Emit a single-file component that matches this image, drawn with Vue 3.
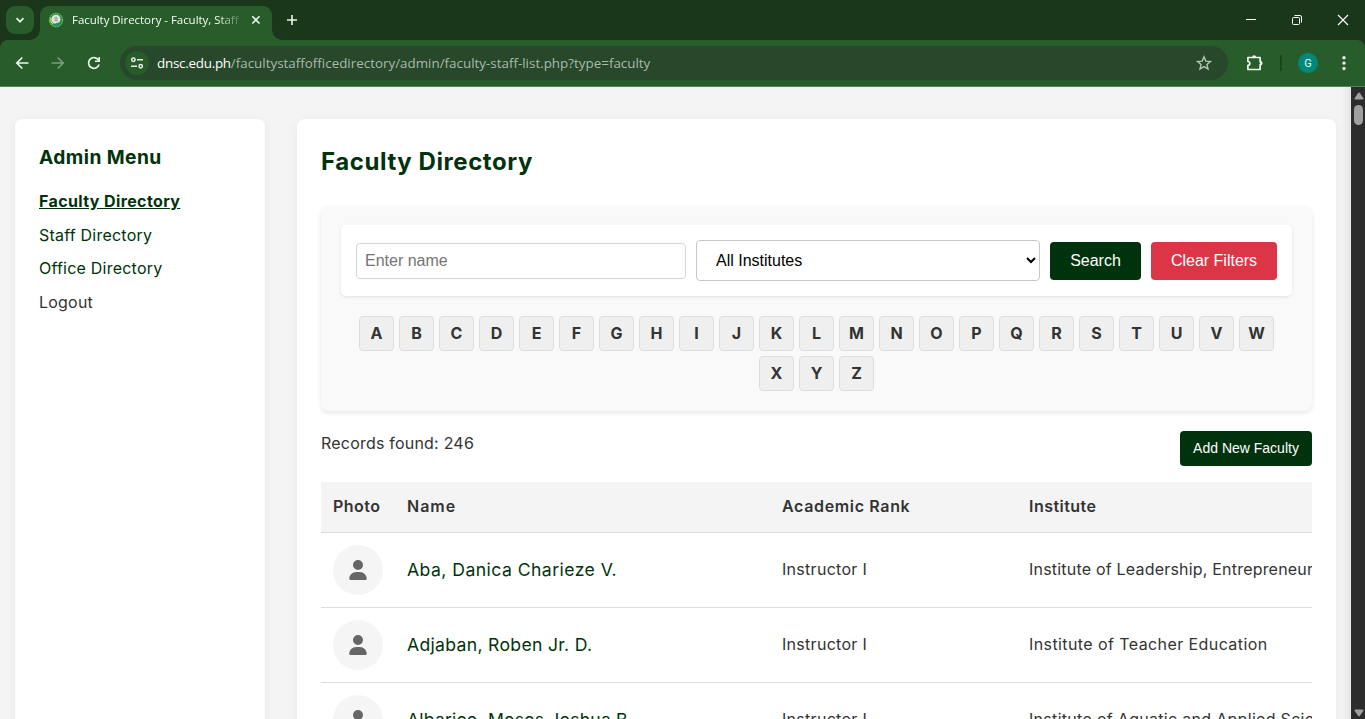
<script setup>
const menu = [
  { label: 'Faculty Directory', cls: 'active' },
  { label: 'Staff Directory', cls: '' },
  { label: 'Office Directory', cls: '' },
  { label: 'Logout', cls: 'logout' },
]
const letters = 'ABCDEFGHIJKLMNOPQRSTUVWXYZ'.split('')
const rows = [
  { name: 'Aba, Danica Charieze V.', rank: 'Instructor I', institute: 'Institute of Leadership, Entrepreneurship' },
  { name: 'Adjaban, Roben Jr. D.', rank: 'Instructor I', institute: 'Institute of Teacher Education' },
  { name: 'Albarico, Moses Joshua B.', rank: 'Instructor I', institute: 'Institute of Aquatic and Applied Sciences' },
]
</script>

<template>
  <div class="window">
    <header class="tabstrip">
      <div class="tab-search">
        <svg width="10" height="10" viewBox="0 0 10 10"><path d="M1.5 3.2 5 6.7 8.5 3.2" fill="none" stroke="#e6eee6" stroke-width="1.7" /></svg>
      </div>
      <div class="tab">
        <svg class="favicon" width="16" height="16" viewBox="0 0 16 16">
          <circle cx="8" cy="8" r="7.4" fill="#2f8a3c" />
          <circle cx="8" cy="8" r="6.6" fill="none" stroke="#7fce6c" stroke-width="1" stroke-dasharray="1.4 1.1" />
          <path d="M3.2 5.5a5.4 5.4 0 0 0 2 6.600" fill="none" stroke="#d8dc5a" stroke-width="1.2" />
          <circle cx="8" cy="7.200" r="4.500" fill="#e4e8e2" />
          <path d="M5.500 6.200h4.800M6.300 8.300h3.800M8 4.200v5.500" stroke="#8a948c" stroke-width=".8" />
          <path d="M7.500 11.200c1.400-.4 2.600-.6 3.600-1.300-.2 2-1.500 3.200-3.400 3.300z" fill="#2189d6" />
        </svg>
        <span class="tab-title">Faculty Directory - Faculty, Staff</span>
        <svg class="tab-close" width="10" height="10" viewBox="0 0 10 10"><path d="m1.300 1.300 7.200 7.200m0-7.200-7.200 7.200" stroke="#f0f5f0" stroke-width="1.600" /></svg>
      </div>
      <svg class="new-tab" width="12" height="12" viewBox="0 0 12 12"><path d="M6 1v10M1 6h10" stroke="#f0f5f0" stroke-width="1.600" /></svg>
      <div class="window-buttons">
        <svg width="12" height="12" viewBox="0 0 12 12"><path d="M1 5.500h10" stroke="#fff" /></svg>
        <svg width="12" height="12" viewBox="0 0 12 12" fill="none" stroke="#fff"><rect x="1.500" y="3.500" width="7" height="7" rx="1" /><path d="M3.500 1.500H9A1.500 1.500 0 0 1 10.500 3v5.500" /></svg>
        <svg width="12" height="12" viewBox="0 0 12 12"><path d="m1 1 10 10m0-10L1 11" stroke="#fff" stroke-width="1.100" /></svg>
      </div>
    </header>

    <div class="toolbar">
      <div class="nav-icons">
        <svg width="14" height="14" viewBox="0 0 14 14" fill="none" stroke="#edf3ed" stroke-width="1.700"><path d="M13.500 7H2M7.300 1.500 1.800 7l5.500 5.500" /></svg>
        <svg width="14" height="14" viewBox="0 0 14 14" fill="none" stroke="#7e9f80" stroke-width="1.600"><path d="M.5 7H12M6.700 1.500 12.200 7l-5.500 5.500" /></svg>
        <svg width="14" height="14" viewBox="0 0 14 14"><path d="M12.100 8.600A5.400 5.400 0 1 1 11.300 3.700L12 4.600" fill="none" stroke="#edf3ed" stroke-width="1.700" /><path d="M13 1v5H8V4.400h3.400V1z" fill="#edf3ed" /></svg>
      </div>
      <div class="omnibox">
        <span class="site-info">
          <svg width="14" height="14" viewBox="0 0 14 14" fill="none" stroke="#e6eee6" stroke-width="1.500"><circle cx="3.400" cy="3.700" r="1.700" /><path d="M7 3.700h6M1 10.300h6" /><circle cx="10.700" cy="10.300" r="1.700" /></svg>
        </span>
        <span class="url"><b>dnsc.edu.ph</b>/facultystaffofficedirectory/admin/faculty-staff-list.php?type=faculty</span>
        <svg class="star" width="16" height="16" viewBox="0 0 16 16"><path d="m8 1.800 1.800 4.300 4.700.4-3.600 3 1.100 4.600-4-2.500-4 2.500 1.100-4.600-3.600-3 4.700-.4z" fill="none" stroke="#b5c3b5" stroke-width="1.400" /></svg>
      </div>
      <svg class="puzzle" width="18" height="18" viewBox="0 0 18 18"><path d="M1.900 3.500h12.200v4.200h.9v2.800h-.9v5H1.900v-4.200c2.600-.3 2.600-3.500 0-3.800z" fill="none" stroke="#f0f5f0" stroke-width="1.700" stroke-linejoin="round" /><path d="M6.100 3.500a2 2.300 0 0 1 4 0zM14.300 7.200a2.300 2 0 0 1 0 4z" fill="#f0f5f0" /></svg>
      <span class="divider"></span>
      <span class="profile">G</span>
      <svg class="dots" width="4" height="16" viewBox="0 0 4 16" fill="#f0f5f0"><circle cx="2" cy="2.700" r="1.700" /><circle cx="2" cy="8.100" r="1.700" /><circle cx="2" cy="13.500" r="1.700" /></svg>
    </div>

    <div class="viewport">
      <div class="page">
        <aside class="sidebar">
          <h3>Admin Menu</h3>
          <ul>
            <li v-for="m in menu" :key="m.label"><a :class="m.cls">{{ m.label }}</a></li>
          </ul>
        </aside>

        <main class="content">
          <h2>Faculty Directory</h2>
          <section class="filters">
            <form class="search-form" @submit.prevent>
              <input type="text" placeholder="Enter name" />
              <select><option>All Institutes</option></select>
              <button class="search" type="button">Search</button>
              <button class="clear" type="button">Clear Filters</button>
            </form>
            <div class="letters">
              <a v-for="l in letters" :key="l">{{ l }}</a>
            </div>
          </section>

          <div class="records">
            <p>Records found: 246</p>
            <button class="add" type="button">Add New Faculty</button>
          </div>

          <div class="table">
            <div class="row head">
              <span>Photo</span><span class="name-head">Name</span><span class="rank-head">Academic Rank</span><span>Institute</span>
            </div>
            <div v-for="r in rows" :key="r.name" class="row">
              <span class="avatar">
                <svg width="18" height="20" viewBox="0 0 448 512"><path fill="#666" d="M224 256A128 128 0 1 0 224 0a128 128 0 1 0 0 256zm-45.700 48C79.800 304 0 383.800 0 482.300 0 498.700 13.300 512 29.700 512h388.600c16.400 0 29.700-13.300 29.700-29.700C448 383.800 368.200 304 269.700 304z" /></svg>
              </span>
              <a class="name">{{ r.name }}</a>
              <span class="rank">{{ r.rank }}</span>
              <span class="institute">{{ r.institute }}</span>
            </div>
          </div>
        </main>
      </div>
      <div class="scrollbar">
        <svg width="10" height="8" viewBox="0 0 10 8"><path d="M4 1.200Q5-.2 6 1.200l3.400 5Q9.900 7.500 8.500 7.500h-7Q.1 7.500.6 6.200z" fill="#9f9f9f" /></svg>
        <i></i>
        <svg class="down" width="10" height="8" viewBox="0 0 10 8"><path d="M4 6.800Q5 8.200 6 6.800l3.400-5Q9.900.5 8.500.5h-7Q.1.5.6 1.800z" fill="#9f9f9f" /></svg>
      </div>
    </div>
  </div>
</template>

<style>
html, body { overflow: hidden; }
</style>

<style scoped>
* { box-sizing: border-box; }
.window { width: 1365px; height: 719px; overflow: hidden; display: flex; flex-direction: column; background: #1b371b; font-family: Inter, "Noto Sans", sans-serif; color: #333; }
svg { display: block; flex: none; }

.tabstrip { height: 40px; flex: none; display: flex; align-items: flex-start; padding: 6px 0 0 6px; }
.tab-search { width: 28px; height: 28px; border-radius: 9px; background: #285c2b; display: grid; place-items: center; margin-right: 6px; }
.tab { position: relative; width: 232px; height: 34px; background: #285c2b; border-radius: 9px 9px 0 0; display: flex; align-items: center; padding: 0 11px 6px 8px; }
.tab::before, .tab::after { content: ""; position: absolute; bottom: 0; width: 10px; height: 10px; }
.tab::before { left: -10px; background: radial-gradient(circle at 0 0, transparent 9.500px, #285c2b 10px); }
.tab::after { right: -10px; background: radial-gradient(circle at 100% 0, transparent 9.500px, #285c2b 10px); }
.tab-title { width: 167px; margin-left: 8px; overflow: hidden; white-space: nowrap; font: 11.500px/18px "Open Sans", sans-serif; letter-spacing: -.04px; color: #f8fbf8; -webkit-mask-image: linear-gradient(90deg, #000 145px, rgba(0,0,0,.2) 167px); mask-image: linear-gradient(90deg, #000 145px, rgba(0,0,0,.2) 167px); }
.tab-close { margin-left: auto; }
.new-tab { margin: 8px 0 0 14px; }
.window-buttons { margin: 8px 16px 0 auto; display: flex; gap: 34px; }

.toolbar { height: 47px; flex: none; background: #285c2b; border-bottom: 1px solid #55855a; border-radius: 8px 8px 0 0; display: flex; align-items: center; padding: 0 19px 0 15px; }
.nav-icons { display: flex; gap: 22px; width: 105px; }
.omnibox { width: 1108px; height: 34px; border-radius: 17px; background: #27482a; display: flex; align-items: center; padding: 0 16px 0 5px; }
.site-info { width: 24px; height: 24px; border-radius: 50%; background: #285c2b; display: grid; place-items: center; margin-right: 8px; flex: none; }
.url { font: 13.400px/20px "Open Sans", sans-serif; color: #a9b9aa; white-space: nowrap; }
.url b { font-weight: 400; color: #fff; letter-spacing: -.25px; }
.star { margin-left: auto; }
.puzzle { margin-left: 18px; }
.divider { width: 2px; height: 16px; margin-left: 16px; background: #1b461e; }
.profile { width: 20px; height: 20px; margin-left: 16px; border-radius: 50%; background: #00897b; color: #e8f6f4; font: 11px/21px Roboto, sans-serif; text-align: center; }
.dots { margin-left: auto; }

.viewport { flex: 1; min-height: 0; display: flex; }
.page { width: 1351px; display: flex; align-items: flex-start; gap: 32px; padding: 32px 15px; background: linear-gradient(90deg, transparent 1341px, rgba(0,0,0,.06) 1351px), #f4f4f4; }
.sidebar, .content { background: #fff; border-radius: 8px; box-shadow: 0 2px 10px rgba(0,0,0,.06); height: 680px; }
.sidebar { width: 250px; padding: 24px; flex: none; }
h3 { margin: 0; font-size: 19.200px; line-height: 29px; font-weight: 700; color: #00330d; letter-spacing: .43px; }
ul { list-style: none; margin: 17px 0 0; padding: 0; }
li { height: 25.600px; line-height: 25.600px; margin-bottom: 8px; letter-spacing: .22px; font-size: 16px; color: #00330d; }
.active { font-weight: 700; text-decoration: underline; letter-spacing: .38px; }
.logout { color: #333; }

.content { width: 1039px; padding: 24px; overflow: hidden; }
h2 { margin: 0 0 25px; font-size: 24px; line-height: 38px; font-weight: 700; color: #00330d; letter-spacing: .57px; }
.filters { height: 205px; background: #f9f9f9; border-radius: 8px; box-shadow: 0 2px 5px rgba(0,0,0,.1); padding: 19px 20px 20px; }
.search-form { height: 71px; margin-bottom: 20px; padding: 0 15px; background: #fff; border-radius: 5px; box-shadow: 0 1px 3px rgba(0,0,0,.1); display: flex; align-items: center; gap: 10px; }
input, select, button { font: 16px "Liberation Sans", Arial, sans-serif; margin: 0; }
input { width: 330px; height: 36px; padding: 0 8px; border: 1px solid #d6d6d6; border-radius: 4px; }
select { width: 344px; height: 41px; padding: 0 0 0 15px; border: 1px solid #c6c6c6; border-radius: 4px; background: #fff; color: #000; }
button { border: 0; border-radius: 4px; color: #fff; padding: 0; white-space: nowrap; }
.search { width: 91px; height: 38px; background: #00330d; }
.clear { width: 126px; height: 38px; background: #dc3545; }
.letters { display: flex; flex-wrap: wrap; justify-content: center; gap: 5px; }
.letters a { width: 35px; height: 35px; line-height: 33px; border: 1px solid #ddd; border-radius: 4px; background: #efefef; text-align: center; font-weight: 700; font-size: 16px; color: #333; }

.records { display: flex; justify-content: space-between; align-items: flex-start; margin: 20px 0 16px; }
.records p { margin: 0; line-height: 24px; font-size: 16px; letter-spacing: .21px; }
.add { width: 132px; height: 35px; padding-bottom: 1px; background: #00330d; font-size: 14px; }

.table { width: 991px; overflow: hidden; }
.row { width: 1200px; height: 75px; display: grid; grid-template-columns: 74px 375px 247px 1fr; align-items: center; padding: 0 12px; border-bottom: 1px solid #ddd; font-size: 16px; line-height: 24px; white-space: nowrap; }
.head { height: 51px; padding-bottom: 2px; background: #f4f4f4; font-weight: 600; letter-spacing: .46px; }
.name-head { letter-spacing: 1px; }
.rank-head { letter-spacing: .65px; }
.avatar { width: 50px; height: 50px; border-radius: 50%; background: #f5f5f5; display: grid; place-items: center; }
.name { font-size: 17.600px; color: #00330d; letter-spacing: .45px; }
.rank { letter-spacing: .29px; padding-bottom: 2px; }
.institute { letter-spacing: .41px; padding-bottom: 2px; }
.row:nth-child(2) .institute { letter-spacing: .2px; }
.row:nth-child(4) .institute { letter-spacing: .3px; }
.row:nth-child(3) .name { letter-spacing: .31px; }
.row:nth-child(4) .name { letter-spacing: .19px; }

.scrollbar { width: 14px; background: #2c2c2c; display: flex; flex-direction: column; align-items: center; padding: 5px 0 2px 1px; }
.scrollbar i { width: 9px; height: 20px; border-radius: 5px; background: #9f9f9f; margin-top: 5px; }
.down { margin-top: auto; }
</style>
